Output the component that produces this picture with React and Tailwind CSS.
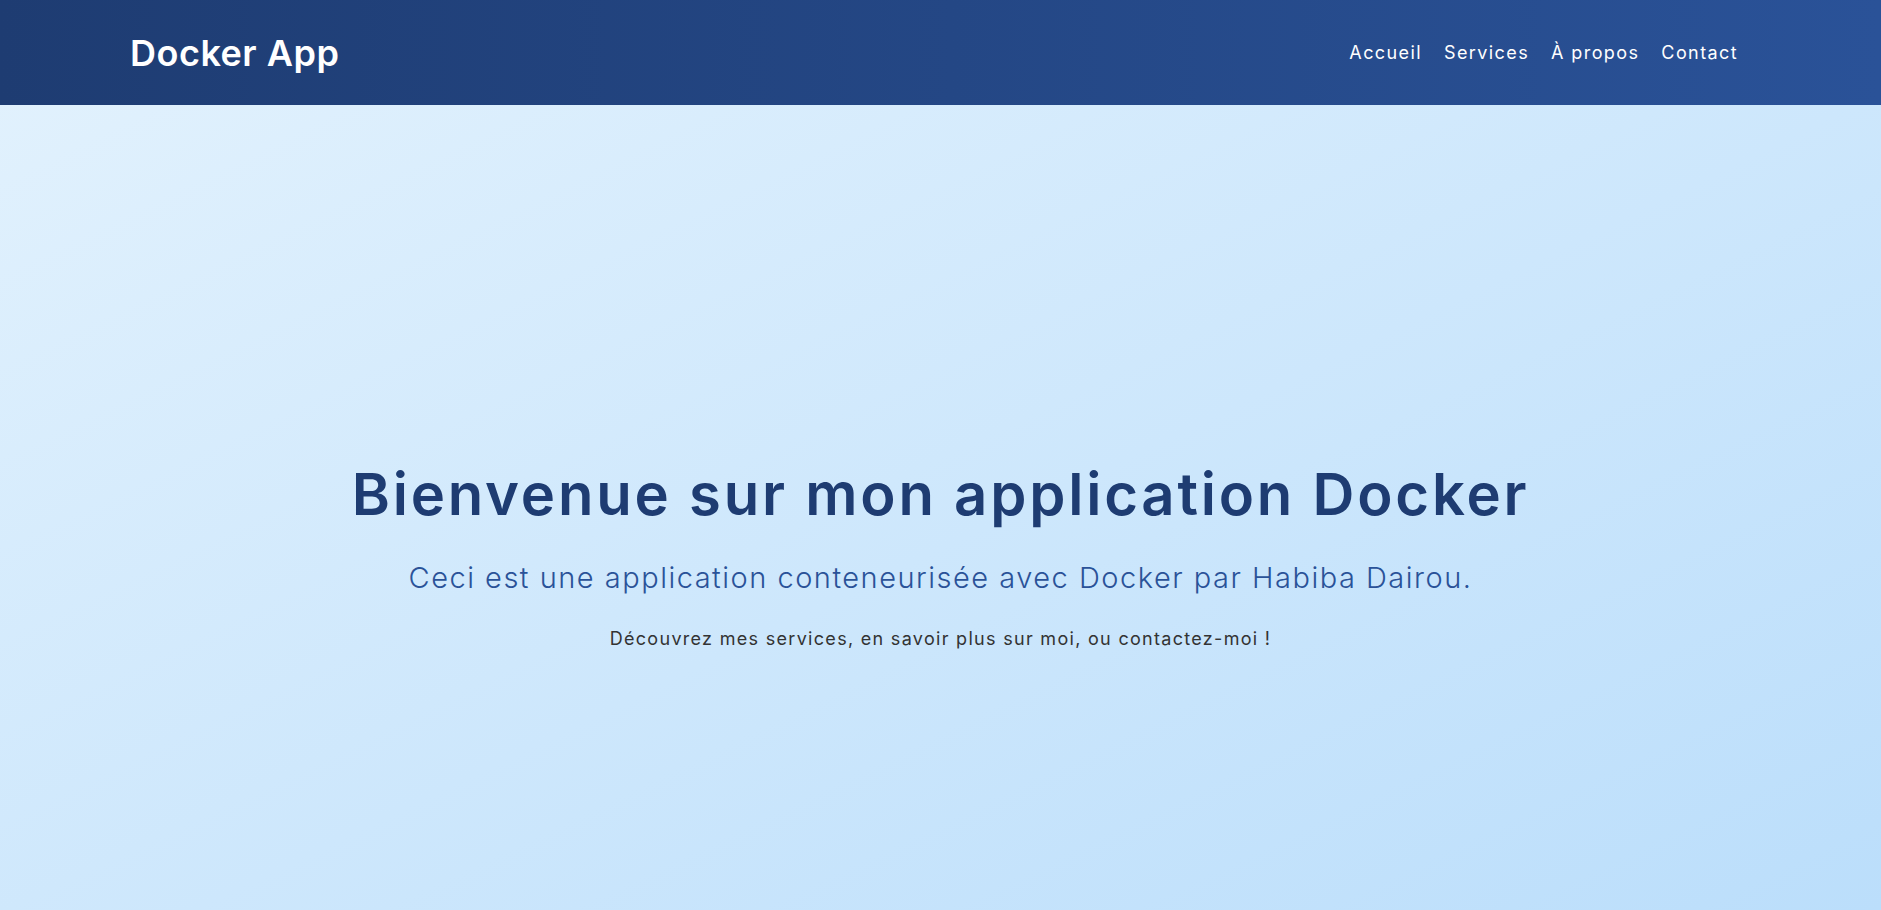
const links = ['Accueil', 'Services', 'À propos', 'Contact']

export default function App() {
  return (
    <div className="flex h-[910px] flex-col overflow-hidden bg-linear-to-br from-[#e3f2fd] to-[#bbdefb] font-['Inter','Open_Sans',sans-serif]">
      <header className="bg-linear-to-r from-[#1e3c72] to-[#2a5298] text-white">
        <nav className="flex h-[105px] items-center justify-between pl-[130px] pr-[143px]">
          <h2 className="text-[36px] font-semibold tracking-[0.5px]">Docker App</h2>
          <ul className="flex items-center gap-[22px]">
            {links.map((l) => (
              <li key={l}>
                <a href="#" className="text-[18px] font-normal tracking-[1.4px] text-white">
                  {l}
                </a>
              </li>
            ))}
          </ul>
        </nav>
      </header>

      <main className="flex flex-1 flex-col items-center justify-center pt-[98px] text-center">
        <h1 className="mb-[28px] text-[58px] font-semibold leading-[1.15] tracking-[2.8px] text-[#1e3c72]">
          Bienvenue sur mon application Docker
        </h1>
        <p className="mb-[26px] text-[29px] font-light leading-[1.5] tracking-[1.5px] text-[#2a5298]">
          Ceci est une application conteneurisée avec Docker par Habiba Dairou.
        </p>
        <p className="text-[18px] leading-[1.5] tracking-[1.3px] text-[#333]">
          Découvrez mes services, en savoir plus sur moi, ou contactez-moi !
        </p>
      </main>
    </div>
  )
}
